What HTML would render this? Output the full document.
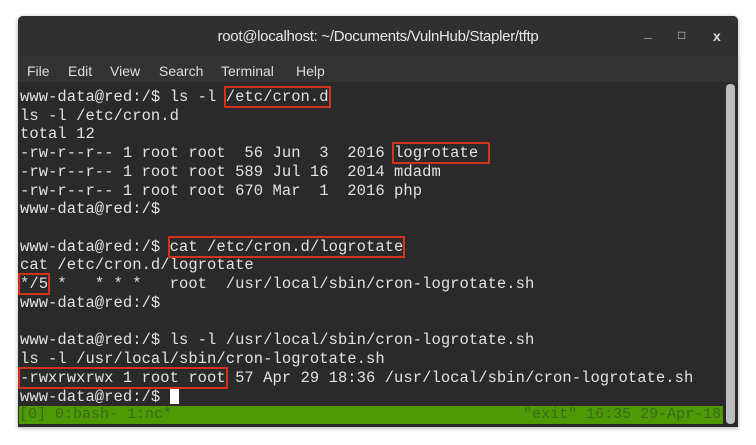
<!DOCTYPE html>
<html><head><meta charset="utf-8"><style>
body{margin:0;width:756px;height:445px;background:#fff;position:relative;overflow:hidden}
.win{position:absolute;left:18px;top:16px;width:720px;height:411px;background:#2a2a2a;border-radius:5px 5px 0 0;box-shadow:0 1px 4px rgba(0,0,0,.35)}
.title{position:absolute;left:0;top:0;width:720px;height:41px;background:#303030;border-radius:5px 5px 0 0;color:#e8e8e8;font:15px "Liberation Sans",sans-serif;text-align:center;line-height:41px;letter-spacing:-0.3px}
.btn{position:absolute;top:12px;height:18px;line-height:18px;color:#ddd;font:bold 14px "Liberation Sans",sans-serif}
.menu{position:absolute;left:0;top:41px;width:720px;height:25px;background:#333;color:#ddd;font:14px "Liberation Sans",sans-serif;line-height:28px}
.menu span{position:absolute}
.term{position:absolute;left:2px;top:72px;font-family:"Liberation Mono",monospace;font-size:15.5px;line-height:18.7px;color:#e2e2e2;white-space:pre;letter-spacing:0.05px}
.b{outline:2px solid #d3331c;outline-offset:0px}
.cur{display:inline-block;width:9px;height:17px;background:#fff;vertical-align:-3px}
.status{position:absolute;left:1px;top:390px;width:704px;height:18px;background:#4e9a06;color:#3a6a18;font:15px "Liberation Mono",monospace;line-height:18px;white-space:pre;overflow:hidden}
.sb{position:absolute;left:708px;top:68px;width:9px;height:340px;background:#bdbdbd;border-radius:4px}
</style></head><body>
<div class="win">
<div class="title">root@localhost: ~/Documents/VulnHub/Stapler/tftp</div>
<div class="btn" style="left:626px;top:8px">_</div>
<div class="btn" style="left:660px;font-size:12px">&#9633;</div>
<div class="btn" style="left:695px">x</div>
<div class="menu"><span style="left:9px">File</span><span style="left:50px">Edit</span><span style="left:92px">View</span><span style="left:141px">Search</span><span style="left:203px">Terminal</span><span style="left:278px">Help</span></div>
<div class="sb"></div>
<div class="term">www-data@red:/$ ls -l <span class="b">/etc/cron.d</span>
ls -l /etc/cron.d
total 12
-rw-r--r-- 1 root root  56 Jun  3  2016 <span class="b">logrotate </span>
-rw-r--r-- 1 root root 589 Jul 16  2014 mdadm
-rw-r--r-- 1 root root 670 Mar  1  2016 php
www-data@red:/$

www-data@red:/$ <span class="b">cat /etc/cron.d/logrotate</span>
cat /etc/cron.d/logrotate
<span class="b">*/5</span> *   * * *   root  /usr/local/sbin/cron-logrotate.sh
www-data@red:/$

www-data@red:/$ ls -l /usr/local/sbin/cron-logrotate.sh
ls -l /usr/local/sbin/cron-logrotate.sh
<span class="b">-rwxrwxrwx 1 root root</span> 57 Apr 29 18:36 /usr/local/sbin/cron-logrotate.sh
www-data@red:/$ <span class="cur"></span></div>
<div class="status">[0] 0:bash- 1:nc*                                       "exit" 16:35 29-Apr-18</div>
</div>
</body></html>
